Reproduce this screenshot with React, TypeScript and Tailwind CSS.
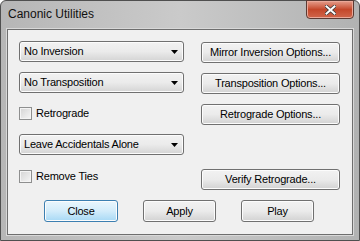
import React from "react";

const font = { fontFamily: '"Liberation Sans", Arial, sans-serif' };

function Arrow() {
  return (
    <svg width="7" height="4" viewBox="0 0 7 4" className="shrink-0">
      <path d="M0 0H7L3.5 4Z" fill="#000" />
    </svg>
  );
}

function Dropdown({ label }: { label: string }) {
  return (
    <div className="flex h-[21px] w-[165px] items-center justify-between rounded-[3px] border border-[#707070] bg-gradient-to-b from-[#f2f2f2] via-[#ebebeb] to-[#d4d4d4] pl-[4px] pr-[5px] shadow-[inset_0_0_0_1px_#fcfcfc]">
      <span className="text-[11px] leading-none tracking-[-0.2px] text-black">{label}</span>
      <Arrow />
    </div>
  );
}

function Btn({ label, w, def }: { label: string; w: string; def?: boolean }) {
  return (
    <div
      className={
        "flex h-[21px] items-center justify-center rounded-[3px] border text-[11px] leading-none tracking-[-0.2px] text-black shadow-[inset_0_0_0_1px_#fcfcfc] " +
        w +
        (def
          ? " border-[#3c7fb1] bg-gradient-to-b from-[#eaf6fd] via-[#d3ecfa] to-[#a7d9f5] shadow-[inset_0_0_0_1px_#f4fbff,0_0_2px_#7ec4ec]"
          : " border-[#707070] bg-gradient-to-b from-[#f2f2f2] via-[#ebebeb] to-[#d2d2d2]")
      }
    >
      {label}
    </div>
  );
}

function Check({ label }: { label: string }) {
  return (
    <div className="flex h-[13px] items-center gap-[4px]">
      <div className="h-[13px] w-[13px] border border-[#8e8f8f] bg-gradient-to-br from-[#d4d4d4] to-[#f6f6f6] shadow-[inset_0_0_0_1px_#f4f4f4]" />
      <span className="text-[11px] leading-none tracking-[-0.2px] text-black">{label}</span>
    </div>
  );
}

export default function App() {
  return (
    <div style={font} className="h-[241px] w-[360px] bg-white">
      <div className="flex h-[241px] w-[360px] flex-col rounded-t-[6px] border border-[#4f4f4f] bg-gradient-to-r from-[#b6b6b6] via-[#cacaca] to-[#b1b2b2]">
        <div className="flex h-[28px] items-start justify-between">
          <span className="ml-[7px] mt-[6px] text-[12px] leading-[14px] text-[#111]">Canonic Utilities</span>
          <div className="mr-[5px] flex h-[19px] w-[48px] -mt-px items-center justify-center rounded-b-[4px] border border-[#5b3a33] bg-gradient-to-b from-[#e59d8b] via-[#c4472a] to-[#d0654a] shadow-[inset_0_0_0_1px_#eaa898]">
            <svg width="11" height="10" viewBox="0 0 11 10">
              <path d="M1.5 1.5L9.5 8.5M9.5 1.5L1.5 8.5" stroke="#3a3a3a" strokeWidth="3.6" strokeLinecap="square" />
              <path d="M1.5 1.5L9.5 8.5M9.5 1.5L1.5 8.5" stroke="#ffffff" strokeWidth="2" strokeLinecap="square" />
            </svg>
          </div>
        </div>
        <div className="mx-[6px] mb-[5px] flex flex-1 flex-col border border-[#6e6e6e] bg-[#f0f0f0] shadow-[0_0_0_1px_#d8d8d8]">
          <div className="flex h-[170px]">
            <div className="ml-[11px] flex flex-col">
              <div className="mt-[11px]"><Dropdown label="No Inversion" /></div>
              <div className="mt-[10px]"><Dropdown label="No Transposition" /></div>
              <div className="mt-[14px]"><Check label="Retrograde" /></div>
              <div className="mt-[14px]"><Dropdown label="Leave Accidentals Alone" /></div>
              <div className="mt-[15px]"><Check label="Remove Ties" /></div>
            </div>
            <div className="ml-[17px] flex flex-col">
              <div className="mt-[12px]"><Btn label="Mirror Inversion Options..." w="w-[139px]" /></div>
              <div className="mt-[10px]"><Btn label="Transposition Options..." w="w-[139px]" /></div>
              <div className="mt-[10px]"><Btn label="Retrograde Options..." w="w-[139px]" /></div>
              <div className="mt-[44px]"><Btn label="Verify Retrograde..." w="w-[139px]" /></div>
            </div>
          </div>
          <div className="ml-[36px] flex gap-[25px]">
            <Btn label="Close" w="w-[74px] h-[22px]" def />
            <Btn label="Apply" w="w-[73px] h-[22px]" />
            <Btn label="Play" w="w-[73px] h-[22px]" />
          </div>
        </div>
      </div>
    </div>
  );
}
